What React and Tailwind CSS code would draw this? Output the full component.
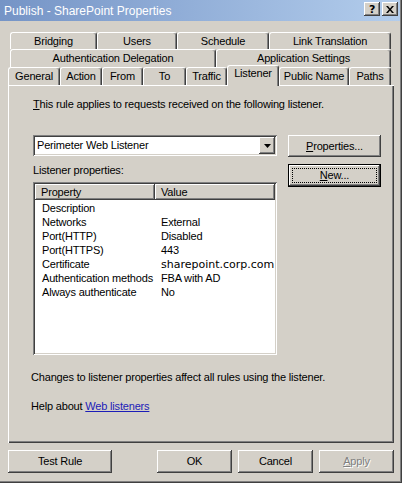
import React from "react";

const raised =
  "bg-[#d4d0c8] shadow-[inset_-1px_-1px_0_#404040,inset_1px_1px_0_#ffffff,inset_-2px_-2px_0_#808080,inset_2px_2px_0_#d4d0c8]";
const sunken =
  "shadow-[inset_1px_1px_0_#808080,inset_-1px_-1px_0_#ffffff,inset_2px_2px_0_#404040,inset_-2px_-2px_0_#d4d0c8]";

function Tab({ className = "", children }) {
  return (
    <div
      className={`h-full shrink-0 flex items-start justify-center pt-[2px] border-t border-l border-white border-r border-r-[#404040] rounded-t-[3px] shadow-[inset_-1px_0_0_#808080] bg-[#d4d0c8] ${className}`}
    >
      {children}
    </div>
  );
}

function Btn({ className = "", children }) {
  return (
    <div className={`${raised} flex items-center justify-center ${className}`}>
      {children}
    </div>
  );
}

const rows = [
  ["Description", ""],
  ["Networks", "External"],
  ["Port(HTTP)", "Disabled"],
  ["Port(HTTPS)", "443"],
  ["Certificate", "sharepoint.corp.com"],
  ["Authentication methods", "FBA with AD"],
  ["Always authenticate", "No"],
];

export default function App() {
  return (
    <div className="w-[402px] h-[483px] bg-[#d4d0c8] overflow-hidden font-['Liberation_Sans',Arial,sans-serif] text-[11px] leading-[13px] tracking-[-0.18px] text-black flex flex-col shadow-[inset_-1px_-1px_0_#404040,inset_-2px_-2px_0_#808080]">
      {/* Title bar */}
      <div className="h-[21px] w-[400px] shrink-0 bg-gradient-to-r from-[#7594c6] to-[#b3cdec] flex items-center pl-[4px] pr-[2px]">
        <span className="text-white text-[12px] leading-[14px] tracking-[0px]">
          Publish - SharePoint Properties
        </span>
        <div className="ml-auto flex mt-[-3px]">
          <div className={`${raised} w-[16px] h-[14px] flex items-center justify-center`}>
            <span className="font-bold text-[11px] leading-[11px] font-['DejaVu_Sans',sans-serif]">?</span>
          </div>
          <div className={`${raised} ml-[2px] w-[16px] h-[14px] flex items-center justify-center`}>
            <svg width="8" height="7" viewBox="0 0 8 7">
              <path d="M0 0h2l2 2.5L6 0h2L5 3.5 8 7H6L4 4.5 2 7H0l3-3.5z" fill="#000" />
            </svg>
          </div>
        </div>
      </div>

      {/* Tabs */}
      <div className="mt-[11px] ml-[10px] h-[17px] flex">
        <Tab className="w-[87px]">Bridging</Tab>
        <Tab className="w-[80px]">Users</Tab>
        <Tab className="w-[92px]">Schedule</Tab>
        <Tab className="w-[122px]">Link Translation</Tab>
      </div>
      <div className="ml-[10px] h-[18px] flex">
        <Tab className="w-[206px]">Authentication Delegation</Tab>
        <Tab className="w-[175px]">Application Settings</Tab>
      </div>
      <div className="ml-[8px] h-[18px] flex items-end relative z-10">
        <Tab className="w-[52px]">General</Tab>
        <Tab className="w-[42px]">Action</Tab>
        <Tab className="w-[41px]">From</Tab>
        <Tab className="w-[43px]">To</Tab>
        <Tab className="w-[41px]">Traffic</Tab>
        <Tab className="w-[52px] !h-[21px] mb-[-1px] !pt-[1px]">Listener</Tab>
        <Tab className="w-[70px]">Public Name</Tab>
        <Tab className="w-[42px]">Paths</Tab>
      </div>

      {/* Panel */}
      <div className="ml-[8px] w-[386px] h-[358px] shrink-0 border-t border-l border-white shadow-[inset_-1px_-1px_0_#404040,inset_-2px_-2px_0_#808080] flex flex-col pl-[24px]">
        <div className="mt-[12px]">
          <span className="underline">T</span>his rule applies to requests received on the following listener.
        </div>

        <div className="mt-[24px] flex">
          <div className="w-[244px] flex flex-col">
            <div className={`h-[21px] bg-white ${sunken} flex items-center pl-[4px] pr-[2px]`}>
              <span>Perimeter Web Listener</span>
              <div className={`${raised} ml-auto w-[16px] h-[17px] flex items-center justify-center`}>
                <svg width="7" height="4" viewBox="0 0 7 4">
                  <path d="M0 0h7L3.5 4z" fill="#000" />
                </svg>
              </div>
            </div>
            <div className="mt-[8px]">Listener properties:</div>
            <div className={`mt-[5px] h-[173px] bg-white ${sunken} p-[2px] flex flex-col`}>
              <div className="flex h-[16px] shrink-0">
                <div className={`${raised} w-[120px] flex items-center pl-[6px]`}>Property</div>
                <div className={`${raised} flex-1 flex items-center pl-[6px]`}>Value</div>
              </div>
              <div className="mt-[1px]">
                {rows.map(([k, v]) => (
                  <div key={k} className="flex h-[14px] items-center">
                    <div className="w-[120px] pl-[7px] whitespace-nowrap">{k}</div>
                    <div
                      className={`pl-[6px] whitespace-nowrap ${
                        v === "sharepoint.corp.com"
                          ? "font-['DejaVu_Sans',Verdana,sans-serif] text-[11px] tracking-[0px]"
                          : ""
                      }`}
                    >
                      {v}
                    </div>
                  </div>
                ))}
              </div>
            </div>
          </div>
          <div className="ml-[11px] flex flex-col">
            <Btn className="w-[93px] h-[22px]">
              <span>
                <span className="underline">P</span>roperties...
              </span>
            </Btn>
            <div className="mt-[7px] w-[93px] h-[23px] border border-black">
              <div className={`${raised} w-full h-full p-[3px]`}>
                <div className="w-full h-full border border-dotted border-black flex items-center justify-center">
                  <span>
                    <span className="underline">N</span>ew...
                  </span>
                </div>
              </div>
            </div>
          </div>
        </div>

        <div className="mt-[16px] -ml-[2px]">
          Changes to listener properties affect all rules using the listener.
        </div>
        <div className="mt-[16px] -ml-[2px]">
          Help about <span className="underline text-[#1c1cb8]">Web listeners</span>
        </div>
      </div>

      {/* Bottom buttons */}
      <div className="mt-[7px] ml-[8px] flex">
        <Btn className="w-[104px] h-[23px]">Test Rule</Btn>
        <Btn className="ml-[45px] w-[75px] h-[23px]">OK</Btn>
        <Btn className="ml-[6px] w-[75px] h-[23px]">Cancel</Btn>
        <Btn className="ml-[6px] w-[75px] h-[23px] text-[#808080] [text-shadow:1px_1px_0_#ffffff]">
          <span>
            <span className="underline">A</span>pply
          </span>
        </Btn>
      </div>
    </div>
  );
}
